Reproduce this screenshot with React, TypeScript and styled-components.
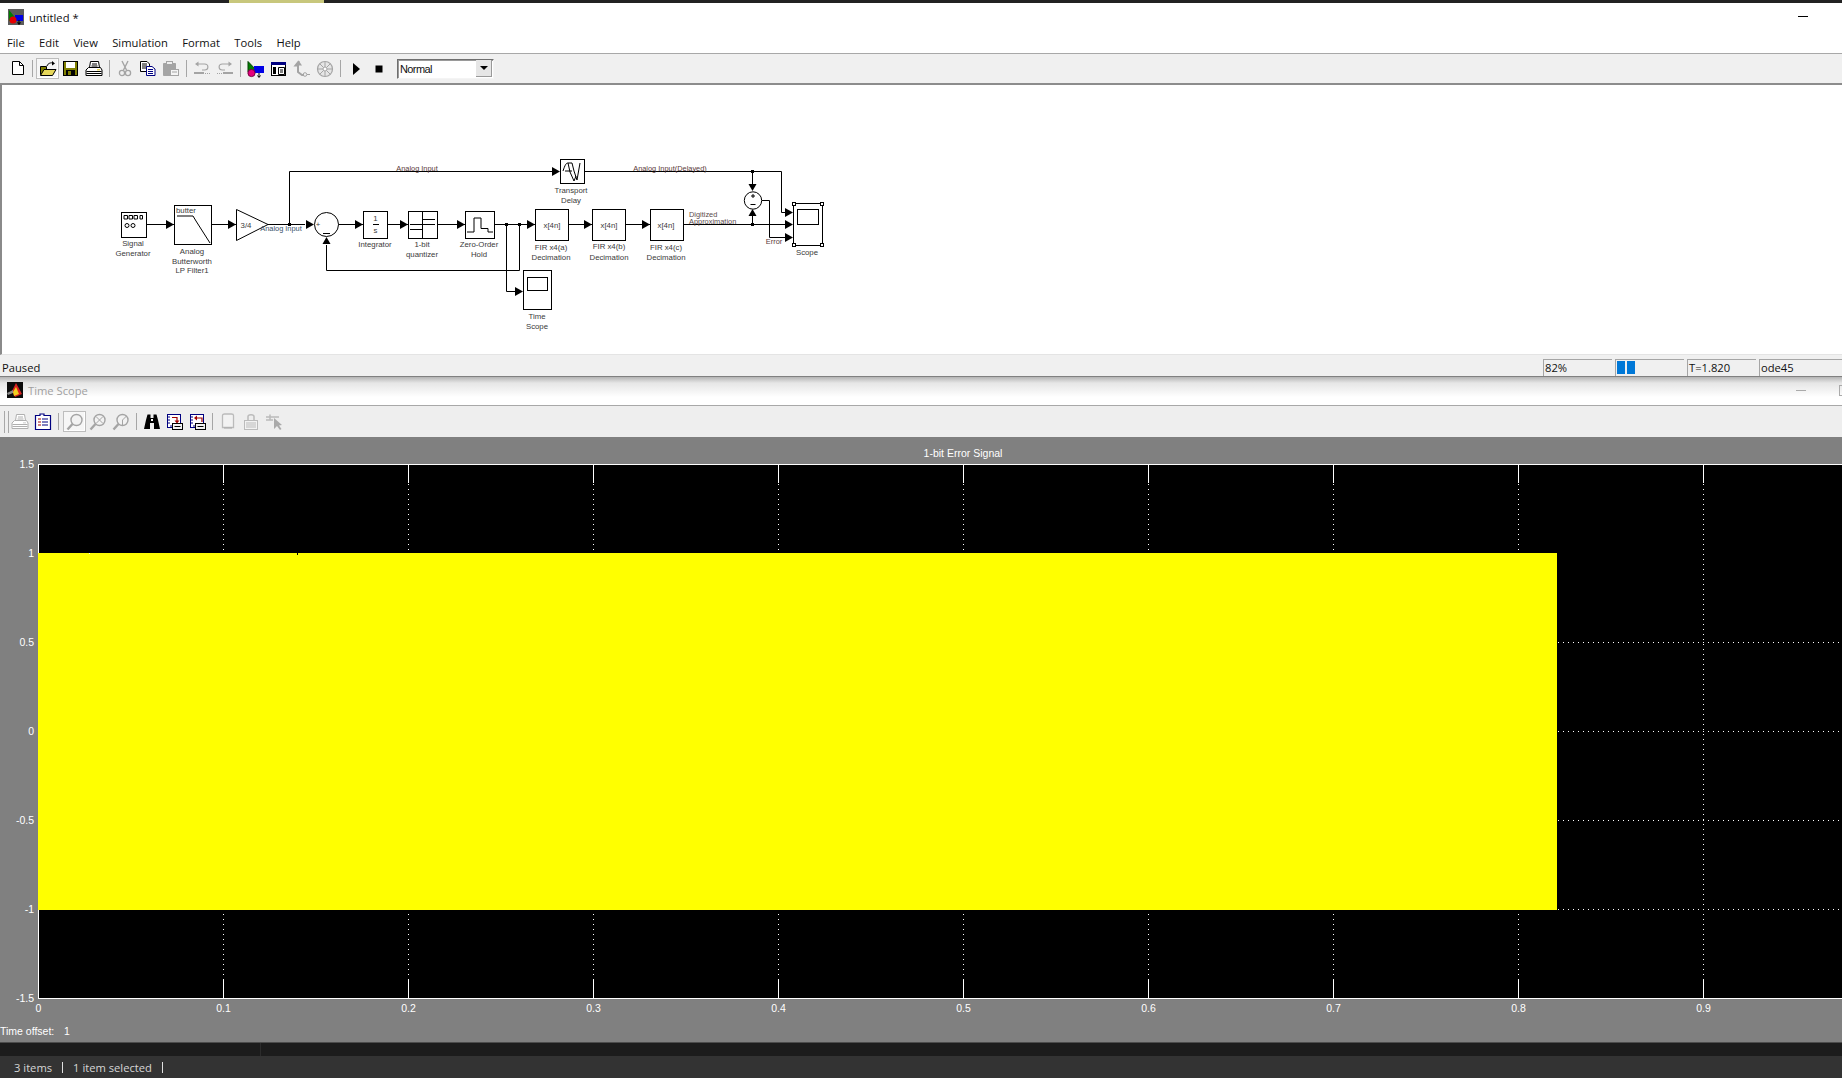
import React from "react";
import styled, { createGlobalStyle } from "styled-components";

const Global = createGlobalStyle`
  html, body { margin: 0; padding: 0; background: #fff; overflow: hidden; }
  #root { width: 1842px; height: 1078px; }
`;

const UI = `"Open Sans", "Noto Sans", "Liberation Sans", sans-serif`;

const Page = styled.div`
  width: 1842px; height: 1078px; display: flex; flex-direction: column; overflow: hidden;
  font-family: ${UI}; font-size: 11.2px; color: #111;
`;
const TopStrip = styled.div`
  height: 3px; flex: none; background: #222; padding-left: 229px;
`;
const TopAccent = styled.div`width: 95px; height: 3px; background: #c8c77c;`;
const TitleBar = styled.div`
  height: 27px; flex: none; background: #fff; display: flex; align-items: center; padding: 0 34px 0 8px; gap: 5px;
`;
const TitleText = styled.div`font-size: 11.2px; color: #111; flex: 1; padding-top: 2px;`;
const MinDash = styled.div<{ $c: string }>`width: 10px; height: 1px; background: ${(p) => p.$c}; flex: none;`;
const MenuBar = styled.div`
  height: 23px; flex: none; background: #fff; display: flex; align-items: center; gap: 14.4px; padding: 2px 0 0 7px; box-sizing: border-box;
`;
const MenuItem = styled.span`font-size: 11.2px;`;
const Toolbar = styled.div<{ $pad: number }>`
  height: 32px; flex: none; box-sizing: border-box; background: #f0f0f0;
  border-top: 1px solid #a8a8a8; border-bottom: 2px solid #8c8c8c;
  display: flex; align-items: center; padding-left: ${(p) => p.$pad}px;
`;
const ToolBtn = styled.div<{ $on?: boolean }>`
  width: 23px; height: 21px; flex: none; box-sizing: border-box; display: flex; align-items: center; justify-content: center;
  ${(p) => (p.$on ? "border: 1px solid #bdbdbd; background: #f6f6f6; box-shadow: inset -1px -1px 0 #fff;" : "")}
`;
const Sep = styled.div<{ $w: number }>`
  width: ${(p) => p.$w}px; height: 17px; flex: none; display: flex; justify-content: center;
  &::before { content: ""; width: 1px; height: 100%; background: #a6a6a6; }
`;
const Combo = styled.div`
  margin-left: 7px; width: 97px; height: 20px; box-sizing: border-box; background: #fff;
  border: 1px solid; border-color: #6f6f6f #f4f4f4 #f4f4f4 #6f6f6f; box-shadow: inset 1px 1px 0 #9a9a9a;
  display: flex; align-items: center; justify-content: space-between; padding-left: 2px;
  font-family: "Liberation Sans", sans-serif; font-size: 11px; letter-spacing: -0.6px;
`;
const ComboBtn = styled.div`
  width: 15px; height: 16px; background: #e6e6e6; border-right: 1px solid #999; border-bottom: 1px solid #999;
  display: flex; align-items: center; justify-content: center; margin-right: 1px;
  &::before { content: ""; border-left: 4px solid transparent; border-right: 4px solid transparent; border-top: 4px solid #000; }
`;
const Canvas = styled.div`
  height: 270px; flex: none; background: #fff; border-left: 2px solid #8a8a8a; border-bottom: 1px solid #e4e4e4;
  box-sizing: border-box; overflow: hidden;
`;
const Diagram = styled.svg`display: block; margin-left: -2px;`;
const Status = styled.div`
  height: 22px; flex: none; box-sizing: border-box; background: #f0f0f0; border-bottom: 1px solid #808080;
  display: flex; align-items: center; padding: 3px 0 0 2px;
`;
const StatusText = styled.div`flex: 1; font-size: 11.2px;`;
const Cell = styled.div`
  width: 69px; margin-left: 3px; flex: none; height: 17px; box-sizing: border-box; border-top: 1px solid #a5a5a5; border-left: 1px solid #a5a5a5;
  display: flex; align-items: center; gap: 2px; padding-left: 1px; font-size: 11.2px; overflow: hidden;
`;
const Block = styled.div`width: 8px; height: 13px; background: #0078d7;`;
const LastCell = styled(Cell)`width: 83px;`;
const ScopeTitle = styled.div`
  height: 29px; flex: none; box-sizing: border-box; background: linear-gradient(#b4b4b4 0, #e6e6e6 6px, #f2f2f2 13px, #fff 20px);
  border-bottom: 1px solid #a8a8a8; display: flex; align-items: center; padding: 0 0 2px 7px; gap: 5px; position: relative;
`;
const ScopeName = styled.div`color: #a0a0a0; font-size: 11.2px; flex: 1;`;
const ScopeMax = styled.div`width: 8px; height: 9px; border: 1px solid #aaa; margin-left: 28px; margin-right: -7px; flex: none;`;
const ScopeToolbar = styled.div`
  height: 31px; flex: none; background: #eee; display: flex; align-items: center; padding-left: 4px;
`;
const Grip = styled.div`
  width: 3px; height: 22px; border-left: 1px solid #a8a8a8; border-right: 1px solid #a8a8a8; margin-right: -1px; flex: none;
`;
const ScopeBody = styled.div`flex: 1; background: #808080; display: flex; flex-direction: column; min-height: 0;`;
const Plot = styled.svg`display: block; flex: none;`;
const OffsetRow = styled.div`
  display: flex; color: #fff; font-family: "Liberation Sans", sans-serif; font-size: 10.5px; height: 22px; align-items: center;
  padding-bottom: 0;
`;
const OffsetLabel = styled.span`width: 64px;`;
const DarkStrip = styled.div`
  height: 14px; flex: none; background: #1c1c1c; border-top: 1px solid #4c4c4c; box-sizing: border-box; display: flex;
`;
const DarkLeft = styled.div`width: 260px; border-right: 1px solid #2c2c2c;`;
const BottomBar = styled.div`
  height: 22px; flex: none; background: #333; color: #d6d6d6; display: flex; align-items: center; padding: 1px 0 0 14px; box-sizing: border-box; font-size: 11.2px;
`;
const BottomItem = styled.span`margin-right: 10px;`;
const Bar = styled.span`width: 1px; height: 11px; background: #e0e0e0; margin-right: 10px;`;

const G = "#a4a4a4";
const Ic = ({ children }: { children: React.ReactNode }) => (
  <svg width="18" height="18" viewBox="0 0 18 18" fill="none">{children}</svg>
);

/* main toolbar drawings */
const INew = () => <Ic><path d="M3.5 1.5H10.5L14.5 5.5V14.5H3.5Z" fill="#fff" stroke="#000"/><path d="M10.5 1.5V5.5H14.5" stroke="#000"/></Ic>;
const IOpen = () => <Ic>
  <path d="M1.5 6.5H7.5V14.5H1.5Z" fill="#808000" stroke="#000"/>
  <path d="M1.5 15.5L5 9.5H17L13.5 15.5Z" fill="#e6d75a" stroke="#000"/>
  <path d="M8 6C9 3 12 2.5 14 3" stroke="#000"/><path d="M13 1L16 3.5L13 5.5Z" fill="#000"/>
</Ic>;
const ISave = () => <Ic>
  <rect x="1.5" y="1.5" width="14" height="14" fill="#808000" stroke="#000"/>
  <rect x="4" y="2" width="9" height="6" fill="#fff"/>
  <rect x="4" y="10" width="9" height="5" fill="#000"/><rect x="6" y="11" width="3" height="4" fill="#808000"/>
</Ic>;
const IPrint = ({ c = "#000" }: { c?: string }) => <Ic>
  <path d="M5.5 1.5H13.5L14.5 7.5H4.5Z" fill="#fff" stroke={c}/>
  <path d="M3.5 7.5H15.5L17 10V15.5H1V10Z" fill="#fff" stroke={c}/>
  <path d="M1.5 11.5H16.5M1.5 13.5H16.5" stroke={c}/><path d="M7 4H12M6.5 6H12.5" stroke={c}/>
  <rect x="12" y="9" width="3" height="1.5" fill={c === "#000" ? "#e6d75a" : "#ddd"}/>
</Ic>;
const ICut = () => <Ic>
  <path d="M6 1L10.5 10M12 1L7.5 10" stroke={G} strokeWidth="1.4"/>
  <circle cx="6" cy="13" r="2.6" stroke={G} strokeWidth="1.3"/><circle cx="12" cy="13" r="2.6" stroke={G} strokeWidth="1.3"/>
</Ic>;
const ICopy = () => <Ic>
  <path d="M1.5 1.5H8L10.5 4V11.5H1.5Z" fill="#fff" stroke="#000"/>
  <path d="M3 4H8M3 6H8M3 8H8" stroke="#000"/>
  <path d="M7.5 6.5H13L16 9V15.5H7.5Z" fill="#fff" stroke="#000080"/>
  <path d="M9 9.5H14M9 11.5H14M9 13.5H14" stroke="#000080"/>
</Ic>;
const IPaste = () => <Ic>
  <path d="M1.5 3.5H13.5V15.5H1.5Z" fill={G} stroke={G}/>
  <rect x="4.5" y="1.5" width="6" height="3" fill="#eee" stroke={G}/>
  <rect x="8.5" y="9.5" width="8" height="6" fill="#f4f4f4" stroke={G}/>
  <path d="M10 12H15" stroke={G}/>
</Ic>;
const IUndo = ({ flip }: { flip?: boolean }) => <Ic>
  <g transform={flip ? "matrix(-1 0 0 1 18 0)" : undefined}>
    <path d="M4 4H11.5C16 4 16 10 11.5 10H9" stroke={G} strokeWidth="1.2"/>
    <path d="M5.5 1.5L2 4L5.5 6.5Z" fill={G}/>
    <path d="M1 13H11" stroke={G} strokeWidth="2"/><path d="M12 13.5H17" stroke={G} strokeDasharray="1 1"/>
  </g>
</Ic>;
const ILib = () => <Ic>
  <path d="M1 1.5L1 12L11 12Z" fill="#008000" stroke="#004000"/>
  <rect x="7" y="6" width="10" height="7" fill="#0000e6"/>
  <circle cx="4.5" cy="13" r="3.6" fill="#e6007e" stroke="#7a0042"/>
  <path d="M12 13V17M10.5 15.5L12 17.5L13.5 15.5" stroke="#000"/>
</Ic>;
const IBrowser = () => <Ic>
  <rect x="1.5" y="2.5" width="14" height="13" fill="#fff" stroke="#000"/>
  <rect x="1" y="2" width="15" height="3" fill="#000080"/>
  <rect x="3" y="7" width="3" height="7" fill="#000"/>
  <path d="M8.5 7.5H14.5V14.5H8.5Z M10 10H13M10 12H13" stroke="#000"/>
</Ic>;
const IGreyTree = () => <Ic>
  <path d="M6 1L2.5 5.5H5V12L9 15H11" stroke={G} strokeWidth="2"/>
  <path d="M6 1L2.5 5.5H9Z" fill={G}/>
  <circle cx="12" cy="14.5" r="1.8" stroke={G}/><path d="M14 14.5H17" stroke={G}/>
</Ic>;
const IWheel = () => <Ic>
  <circle cx="9" cy="9" r="7.5" fill="#e6e6e6" stroke={G} strokeWidth="1.2"/>
  <circle cx="9" cy="9" r="2" fill="#fff" stroke={G}/>
  <path d="M9 2V7M16 9H11M9 16V11M2 9H7M4 4L7.5 7.5M14 4L10.5 7.5M4 14L7.5 10.5M14 14L10.5 10.5" stroke={G}/>
</Ic>;
const IPlay = () => <Ic><path d="M6 3L13 9L6 15Z" fill="#000"/></Ic>;
const IStop = () => <Ic><rect x="5.5" y="5.5" width="7" height="7" fill="#000"/></Ic>;

/* scope toolbar drawings */
const IDoc = () => <Ic>
  <path d="M1.5 2.5H6V1H10V2.5H16.5V16.5H1.5Z" fill="#fff" stroke="#000080" strokeWidth="1.2"/>
  <path d="M4 6H7M4 9H7M4 12H7" stroke="#a00000"/><path d="M8 6H14M8 9H14M8 12H14" stroke="#000080"/>
</Ic>;
const IMag = ({ mark }: { mark?: "plus" | "x" | "y" }) => <Ic>
  <circle cx="10.5" cy="7" r="5.5" fill="#f2f2f2" stroke={G} strokeWidth="1.4"/>
  <path d="M6.5 11L1.5 16.5" stroke={G} strokeWidth="2.4"/>
  {mark === "x" && <path d="M7 3.5L14 10.5M14 3.5L7 10.5" stroke={G}/>}
  {mark === "y" && <path d="M10.5 7L10.5 12.5M10.5 7L14.5 3" stroke={G}/>}
</Ic>;
const IBino = () => <Ic>
  <path d="M4.5 1.5H7.5V5H10.5V1.5H13.5L15 7L17 16H11V10H7V16H1L3 7Z" fill="#000"/>
  <rect x="8" y="6" width="2" height="2" fill="#fff"/>
</Ic>;
const IBar = ({ back }: { back?: boolean }) => <Ic>
  <rect x="1.5" y="1.5" width="13" height="13" fill="#fff" stroke="#000080"/>
  <path d="M1.5 4H4M1.5 7H4M1.5 10H4M5 14.5V12M8 14.5V12" stroke="#000080"/>
  <path d={back ? "M13 9V5H7.5" : "M6 4.5H11V8.5"} stroke="#a00000" strokeWidth="1.2"/>
  <path d={back ? "M8 2.5V7.5L5 5Z" : "M8.5 7.5H13.5L11 10.5Z"} fill="#a00000"/>
  <rect x="6.5" y="10.5" width="10" height="6" fill="#f2f2f2" stroke="#000"/>
  <path d="M8.5 13.5H14.5" stroke="#000"/>
</Ic>;
const IDisk = () => <Ic><path d="M3.5 2.5C3.5 1.5 4.5 1 5.5 1H12.5C13.5 1 14.5 1.5 14.5 2.5V14.5H3.5Z" fill="#f2f2f2" stroke="#bbb" strokeWidth="1.3"/><path d="M5.5 15H12.5" stroke="#aaa" strokeDasharray="1 1" strokeWidth="2"/></Ic>;
const ILock = () => <Ic>
  <path d="M6 7V3.5C6 1 12 1 12 3.5V7" stroke="#bbb" strokeWidth="1.5"/>
  <rect x="2.5" y="7.5" width="13" height="9" fill="#f2f2f2" stroke="#bbb"/>
  <path d="M4 10H14M4 12H14M4 14H14" stroke="#bbb"/>
</Ic>;
const ICursor = () => <Ic>
  <path d="M1 4H14M5 1.5V7M1 7H8" stroke="#bbb" strokeWidth="1.5"/>
  <path d="M9 5V16L12 13L15 17L16.5 16L14 12.5L17 12Z" fill="#aaa"/>
</Ic>;

/* diagram helpers */
const Ln = ({ d }: { d: string }) => <path d={d} stroke="#000" fill="none"/>;
const ArrR = ({ x, y }: { x: number; y: number }) => <path d={`M${x - 8} ${y - 4.5}L${x} ${y}L${x - 8} ${y + 4.5}Z`} fill="#000"/>;
const ArrU = ({ x, y }: { x: number; y: number }) => <path d={`M${x - 4} ${y + 7}L${x} ${y}L${x + 4} ${y + 7}Z`} fill="#000"/>;
const ArrD = ({ x, y }: { x: number; y: number }) => <path d={`M${x - 4} ${y - 7}L${x} ${y}L${x + 4} ${y - 7}Z`} fill="#000"/>;
const Box = ({ x, y, w, h }: { x: number; y: number; w: number; h: number }) => <rect x={x} y={y} width={w} height={h} fill="#fff" stroke="#000"/>;
const Dot = ({ x, y }: { x: number; y: number }) => <rect x={x - 1.5} y={y - 1.5} width="3" height="3" fill="#000"/>;
const Handle = ({ x, y }: { x: number; y: number }) => <rect x={x - 1.5} y={y - 1.5} width="3" height="3" fill="#fff" stroke="#000"/>;
const DiagText = styled.text<{ $c?: string; $s?: number }>`
  font-family: "Liberation Sans", sans-serif; font-size: ${(p) => p.$s || 7.8}px; fill: ${(p) => p.$c || "#3a3a3a"};
`;
const T = ({ x, y, s, a = "middle", c }: { x: number; y: number; s: string; a?: string; c?: string }) => (
  <DiagText x={x} y={y} textAnchor={a as "middle"} $c={c} $s={c ? 7.4 : undefined}>{s}</DiagText>
);

const DiagramView = () => (
  <Diagram width="900" height="270" viewBox="0 85 900 270">
    <Ln d="M146 224.5H305M338 224.5H363M387 224.5H408M437 224.5H465M494 224.5H535M569 224.5H592M625 224.5H650M683 224.5H791"/>
    <Ln d="M289.5 224V171.5H552M585 171.5H781.5V212.5H785"/>
    <Ln d="M519.5 224.5V270.5H326.5V245M506.5 224.5V291.5H516"/>
    <Ln d="M752.5 171.5V184M752.5 216V224.5M762 200.5H769.5V237.5H785"/>

    <ArrR x={174} y={224.5}/><ArrR x={236} y={224.5}/><ArrR x={314} y={224.5}/><ArrR x={363} y={224.5}/>
    <ArrR x={408} y={224.5}/><ArrR x={465} y={224.5}/><ArrR x={535} y={224.5}/><ArrR x={592} y={224.5}/>
    <ArrR x={650} y={224.5}/><ArrR x={560} y={171.5}/><ArrR x={793} y={212.5}/><ArrR x={793} y={224.5}/>
    <ArrR x={793} y={237.5}/><ArrR x={523} y={291.5}/>
    <ArrU x={326.5} y={237}/><ArrD x={752.5} y={191}/><ArrU x={752.5} y={209}/>
    <Dot x={289.5} y={224.5}/><Dot x={506.5} y={224.5}/><Dot x={519.5} y={224.5}/><Dot x={752.5} y={171.5}/><Dot x={752.5} y={224.5}/>

    {/* Signal generator */}
    <Box x={121.5} y={212.5} w={25} h={25}/>
    <path d="M124 215.5h3.5v3.5h-3.5zM129 215.5h3.5v3.5h-3.5zM134 215.5h3.5v3.5h-3.5zM140 215.5h2.5v3.5h-2.5z" stroke="#000" fill="none"/>
    <circle cx="127" cy="225.5" r="2" stroke="#000" fill="none"/><circle cx="133" cy="225.5" r="2" stroke="#000" fill="none"/>
    <T x={133} y={246} s="Signal"/><T x={133} y={256} s="Generator"/>

    {/* Butterworth */}
    <Box x={174.5} y={205.5} w={37} h={39}/>
    <path d="M177 216H193L196 221L210 243" stroke="#000" fill="none"/>
    <T x={176} y={213} s="butter" a="start"/>
    <T x={192} y={254} s="Analog"/><T x={192} y={264} s="Butterworth"/><T x={192} y={273} s="LP Filter1"/>

    {/* Gain */}
    <path d="M236.5 209.5V240.5L268 224.5Z" fill="#fff" stroke="#000"/>
    <T x={246} y={228} s="3/4"/>
    <T x={281} y={231} s="Analog Input" c="#39536b"/>
    <T x={417} y={171} s="Analog Input" c="#5a3a3a"/>

    {/* Sum */}
    <circle cx="326.5" cy="224.5" r="12" fill="#fff" stroke="#000"/>
    <T x={318} y={227} s="+"/><path d="M323 233.5H330" stroke="#000"/>

    {/* Integrator */}
    <Box x={363.5} y={211.5} w={24} h={27}/>
    <path d="M373 224.5H379" stroke="#000"/><T x={375.5} y={221} s="1"/><T x={375.5} y={233} s="s"/>
    <T x={375} y={247} s="Integrator"/>

    {/* Quantizer */}
    <Box x={408.5} y={211.5} w={29} h={27}/>
    <path d="M410 229.5H422.5V219.5H435M422.5 212V238M410 224.5H435" stroke="#000" fill="none"/>
    <T x={422} y={247} s="1-bit"/><T x={422} y={257} s="quantizer"/>

    {/* ZOH */}
    <Box x={465.5} y={211.5} w={29} h={27}/>
    <path d="M467 232H474V218H481V228.5H488V232H493" stroke="#000" fill="none"/>
    <T x={479} y={247} s="Zero-Order"/><T x={479} y={257} s="Hold"/>

    {/* FIR */}
    <Box x={535.5} y={209.5} w={33} h={31}/><T x={552} y={228} s="x[4n]"/>
    <T x={551} y={250} s="FIR x4(a)"/><T x={551} y={260} s="Decimation"/>
    <Box x={592.5} y={209.5} w={33} h={31}/><T x={609} y={228} s="x[4n]"/>
    <T x={609} y={249} s="FIR x4(b)"/><T x={609} y={260} s="Decimation"/>
    <Box x={650.5} y={209.5} w={33} h={31}/><T x={666} y={228} s="x[4n]"/>
    <T x={666} y={250} s="FIR x4(c)"/><T x={666} y={260} s="Decimation"/>

    {/* Transport delay */}
    <Box x={560.5} y={159.5} w={24} h={24}/>
    <path d="M563 171C565 165 566 163 568 163L570 172L574 181L576 176M568 163H572L574 171L577 180L580 163M565 171H572" stroke="#000" fill="none"/>
    <T x={571} y={193} s="Transport"/><T x={571} y={203} s="Delay"/>
    <T x={670} y={171} s="Analog Input(Delayed)" c="#5a3a3a"/>

    {/* Error sum */}
    <circle cx="753" cy="200.5" r="8.7" fill="#fff" stroke="#000"/>
    <path d="M751 196H755M753 194V198M750.5 204.5H755.5" stroke="#000"/>
    <T x={689} y={217} s="Digitized" a="start" c="#5a4a4a"/>
    <T x={689} y={224} s="Approximation" a="start" c="#5a4a4a"/>
    <T x={774} y={244} s="Error" c="#5a3a3a"/>

    {/* Scope */}
    <Box x={793.5} y={203.5} w={29} h={42}/>
    <rect x="797.5" y="209.5" width="21" height="15" fill="#fff" stroke="#000"/>
    <Handle x={794} y={204}/><Handle x={822} y={204}/><Handle x={794} y={245}/><Handle x={822} y={245}/>
    <T x={807} y={255} s="Scope"/>

    {/* Time scope */}
    <Box x={523.5} y={270.5} w={28} h={39}/>
    <rect x="527.5" y="277.5" width="20" height="13" fill="#fff" stroke="#000"/>
    <T x={537} y={319} s="Time"/><T x={537} y={329} s="Scope"/>
  </Diagram>
);

/* plot */
const PX0 = 38.5, PDX = 185, PY = [464.5, 553.5, 642.5, 731.5, 820.5, 909.5, 998.5];
const OY = 437;
const PlotText = styled.text`font-family: "Liberation Sans", sans-serif; font-size: 10.5px; fill: #fff;`;
const xs = Array.from({ length: 10 }, (_, i) => i);
const yLabels = ["1.5", "1", "0.5", "0", "-0.5", "-1", "-1.5"];

const PlotView = () => (
  <Plot width="1842" height="583" viewBox={`0 ${OY} 1842 583`}>
    <rect x="38" y="464" width="1804" height="534" fill="#000"/>
    <path d={`M38.5 464V999M38 ${PY[0]}H1842M38 ${PY[6]}H1842`} stroke="#fff"/>
    {xs.slice(1).map((i) => {
      const x = PX0 + i * PDX;
      return <g key={i}>
        <path d={`M${x} 464V998`} stroke="#fff" strokeDasharray="1 4"/>
        <path d={`M${x} 464V483M${x} 979V998`} stroke="#fff"/>
      </g>;
    })}
    {[2, 3, 4, 5].map((i) => <path key={i} d={`M38 ${PY[i]}H1842`} stroke="#fff" strokeDasharray="1 4"/>)}
    <rect x="38" y="553" width="1519" height="357" fill="#ff0"/>
    <rect x="89" y="553" width="1" height="1" fill="#fff"/>
    <rect x="297" y="553" width="1" height="2" fill="#000"/>
    <PlotText x={963} y={457} textAnchor="middle">1-bit Error Signal</PlotText>
    {yLabels.map((s, i) => <PlotText key={s} x={34} y={PY[i] + 3} textAnchor="end">{s}</PlotText>)}
    {xs.map((i) => <PlotText key={i} x={PX0 + i * PDX} y={1012} textAnchor="middle">{i === 0 ? "0" : `0.${i}`}</PlotText>)}
  </Plot>
);

const TitleIcon = () => (
  <svg width="16" height="16" viewBox="0 0 16 16"><rect width="16" height="16" fill="#5c5c5c"/><path d="M1 1V12H10Z" fill="#008000"/><rect x="7" y="6" width="8" height="6" fill="#0000e6"/><circle cx="5" cy="11" r="3.5" fill="#e60000"/><path d="M11 11V15M9.5 13.5L11 15.5L12.5 13.5" stroke="#000"/></svg>
);
const ScopeIcon = () => (
  <svg width="16" height="16" viewBox="0 0 16 16"><rect width="16" height="16" fill="#0c0c0c"/><path d="M9 1L15 12L8 15L5 9Z" fill="#d82020"/><path d="M9 5L12 12L7 14L6 10Z" fill="#f0d020"/><path d="M0 11L6 8L6 11L1 13Z" fill="#8a8a8a"/></svg>
);

export default function App() {
  return (
    <Page>
      <Global/>
      <TopStrip><TopAccent/></TopStrip>
      <TitleBar>
        <TitleIcon/>
        <TitleText>untitled *</TitleText>
        <MinDash $c="#000"/>
      </TitleBar>
      <MenuBar>
        {["File", "Edit", "View", "Simulation", "Format", "Tools", "Help"].map((m) => <MenuItem key={m}>{m}</MenuItem>)}
      </MenuBar>
      <Toolbar $pad={6}>
        <ToolBtn><INew/></ToolBtn>
        <Sep $w={7}/>
        <ToolBtn $on><IOpen/></ToolBtn>
        <ToolBtn><ISave/></ToolBtn>
        <ToolBtn><IPrint/></ToolBtn>
        <Sep $w={8}/>
        <ToolBtn><ICut/></ToolBtn>
        <ToolBtn><ICopy/></ToolBtn>
        <ToolBtn><IPaste/></ToolBtn>
        <Sep $w={8}/>
        <ToolBtn><IUndo/></ToolBtn>
        <ToolBtn><IUndo flip/></ToolBtn>
        <Sep $w={8}/>
        <ToolBtn><ILib/></ToolBtn>
        <ToolBtn><IBrowser/></ToolBtn>
        <ToolBtn><IGreyTree/></ToolBtn>
        <ToolBtn><IWheel/></ToolBtn>
        <Sep $w={8}/>
        <ToolBtn><IPlay/></ToolBtn>
        <ToolBtn><IStop/></ToolBtn>
        <Combo>Normal<ComboBtn/></Combo>
      </Toolbar>
      <Canvas><DiagramView/></Canvas>
      <Status>
        <StatusText>Paused</StatusText>
        <Cell>82%</Cell>
        <Cell><Block/><Block/></Cell>
        <Cell>T=1.820</Cell>
        <LastCell>ode45</LastCell>
      </Status>
      <ScopeTitle>
        <ScopeIcon/>
        <ScopeName>Time Scope</ScopeName>
        <MinDash $c="#aaa"/>
        <ScopeMax/>
      </ScopeTitle>
      <ScopeToolbar>
        <Grip/>
        <ToolBtn><IPrint c="#b0b0b0"/></ToolBtn>
        <ToolBtn><IDoc/></ToolBtn>
        <Sep $w={9}/>
        <ToolBtn $on><IMag/></ToolBtn>
        <ToolBtn><IMag mark="x"/></ToolBtn>
        <ToolBtn><IMag mark="y"/></ToolBtn>
        <Sep $w={8}/>
        <ToolBtn><IBino/></ToolBtn>
        <ToolBtn><IBar/></ToolBtn>
        <ToolBtn><IBar back/></ToolBtn>
        <Sep $w={7}/>
        <ToolBtn><IDisk/></ToolBtn>
        <ToolBtn><ILock/></ToolBtn>
        <ToolBtn><ICursor/></ToolBtn>
      </ScopeToolbar>
      <ScopeBody>
        <PlotView/>
        <OffsetRow><OffsetLabel>Time offset:</OffsetLabel>1</OffsetRow>
      </ScopeBody>
      <DarkStrip><DarkLeft/></DarkStrip>
      <BottomBar>
        <BottomItem>3 items</BottomItem><Bar/>
        <BottomItem>1 item selected</BottomItem><Bar/>
      </BottomBar>
    </Page>
  );
}
